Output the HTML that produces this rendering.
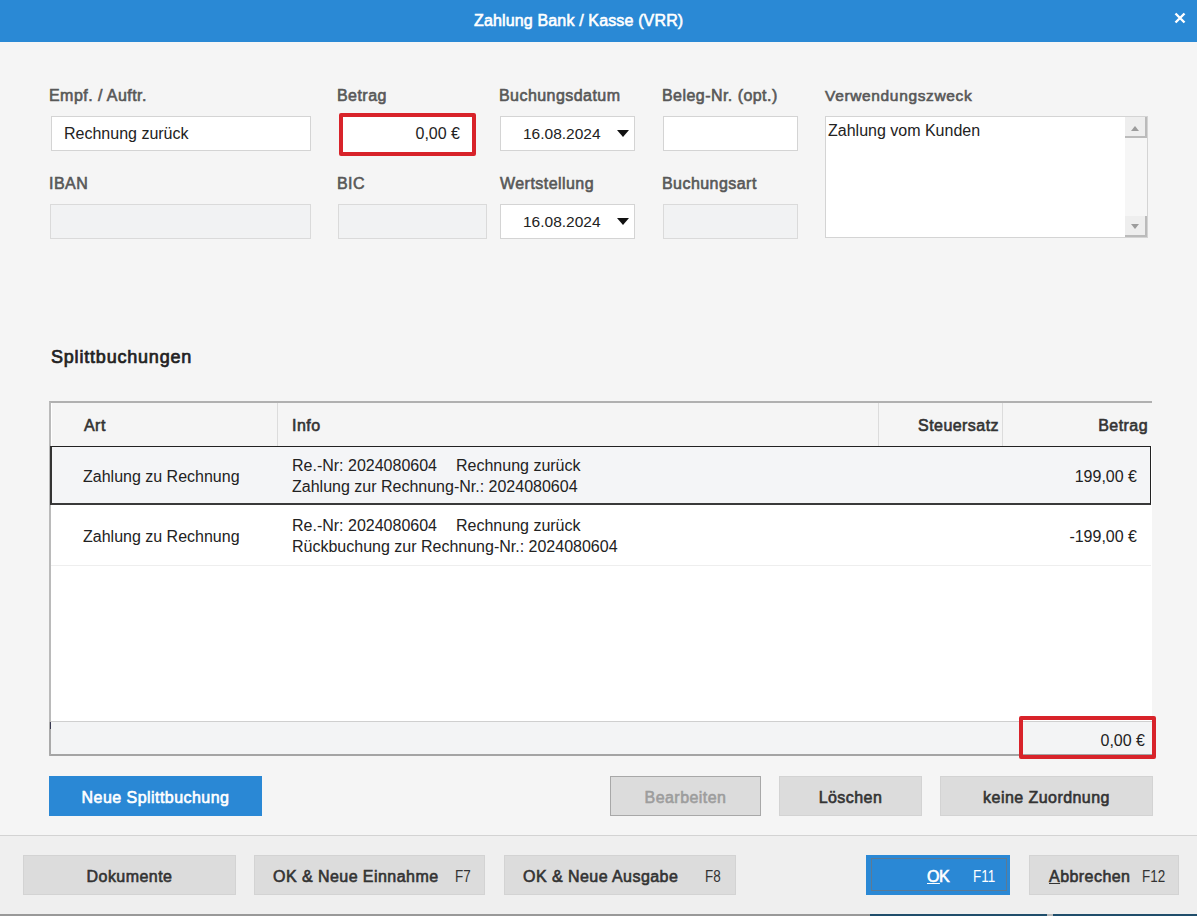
<!DOCTYPE html>
<html><head><meta charset="utf-8">
<style>
*{box-sizing:border-box;margin:0;padding:0}
html,body{width:1197px;height:916px;overflow:hidden;background:#f5f5f5;font-family:"Liberation Sans",sans-serif;color:#222}
.a{position:absolute;white-space:nowrap}
.t{position:absolute;white-space:nowrap;font-size:16px;line-height:16px}
.lbl{position:absolute;white-space:nowrap;font-size:16px;line-height:16px;font-weight:normal;color:#585858;-webkit-text-stroke-width:0.6px;letter-spacing:0.45px}
.box{position:absolute;background:#fff;border:1px solid #d4d4d4}
.dis{position:absolute;background:#f1f2f3;border:1px solid #dadada}
.btn{position:absolute;background:#dcdcdc;border:1px solid #d3d3d3}
.bt{position:absolute;white-space:nowrap;font-size:16px;line-height:16px;font-weight:normal;color:#333;-webkit-text-stroke-width:0.6px;letter-spacing:0.45px}
.fk{position:absolute;white-space:nowrap;font-size:16px;line-height:16px;font-weight:normal;color:#333;transform:scaleX(0.84);transform-origin:0 0}
.tri{position:absolute;width:0;height:0;border-left:6px solid transparent;border-right:6px solid transparent;border-top:7px solid #111}
</style></head>
<body>
<!-- title bar -->
<div class="a" style="left:0;top:0;width:1197px;height:42px;background:#2a89d5"></div>
<div class="t" style="left:474px;top:13px;font-size:16px;color:#fff;-webkit-text-stroke-width:0.6px;letter-spacing:0.15px">Zahlung Bank / Kasse (VRR)</div>
<svg class="a" style="left:1174px;top:12px" width="12" height="12" viewBox="0 0 12 12"><path d="M1.5 1.5L10.5 10.5M10.5 1.5L1.5 10.5" stroke="#fff" stroke-width="2.4"/></svg>

<!-- row 1 labels -->
<div class="lbl" style="left:49px;top:88px">Empf. / Auftr.</div>
<div class="lbl" style="left:337px;top:88px">Betrag</div>
<div class="lbl" style="left:499px;top:88px">Buchungsdatum</div>
<div class="lbl" style="left:662px;top:88px">Beleg-Nr. (opt.)</div>
<div class="lbl" style="left:825px;top:88px;font-size:15.5px;letter-spacing:0.65px">Verwendungszweck</div>

<div class="box" style="left:51px;top:116px;width:260px;height:35px"></div>
<div class="t" style="left:64px;top:126px">Rechnung zurück</div>

<div class="a" style="left:339px;top:113px;width:137px;height:43px;border:4px solid #d8232a;border-radius:2px;background:#fff"></div>
<div class="t" style="left:340px;top:126px;width:120px;text-align:right">0,00 €</div>

<div class="box" style="left:500px;top:116px;width:135px;height:35px"></div>
<div class="t" style="left:523px;top:126px;font-size:15.5px">16.08.2024</div>
<div class="tri" style="left:617px;top:130px"></div>

<div class="box" style="left:663px;top:116px;width:135px;height:35px"></div>

<div class="box" style="left:825px;top:116px;width:323px;height:122px"></div>
<div class="t" style="left:828px;top:123px">Zahlung vom Kunden</div>
<!-- scrollbar -->
<div class="a" style="left:1125px;top:117px;width:22px;height:120px;background:#f6f6f6"></div>
<div class="a" style="left:1125px;top:117px;width:22px;height:21px;background:#eeeeee;border-right:2px solid #bbbbbb;border-bottom:2px solid #bbbbbb"></div>
<div class="a" style="left:1131px;top:126px;width:0;height:0;border-left:4.5px solid transparent;border-right:4.5px solid transparent;border-bottom:5px solid #9c9c9c"></div>
<div class="a" style="left:1125px;top:216px;width:22px;height:21px;background:#eeeeee;border-right:2px solid #bbbbbb;border-bottom:2px solid #bbbbbb"></div>
<div class="a" style="left:1131px;top:224px;width:0;height:0;border-left:4.5px solid transparent;border-right:4.5px solid transparent;border-top:5px solid #9c9c9c"></div>

<!-- row 2 labels -->
<div class="lbl" style="left:49px;top:176px">IBAN</div>
<div class="lbl" style="left:337px;top:176px">BIC</div>
<div class="lbl" style="left:500px;top:176px">Wertstellung</div>
<div class="lbl" style="left:662px;top:176px">Buchungsart</div>

<div class="dis" style="left:50px;top:204px;width:261px;height:35px"></div>
<div class="dis" style="left:338px;top:204px;width:149px;height:35px"></div>
<div class="box" style="left:500px;top:204px;width:135px;height:35px"></div>
<div class="t" style="left:523px;top:214px;font-size:15.5px">16.08.2024</div>
<div class="tri" style="left:617px;top:218px"></div>
<div class="dis" style="left:663px;top:204px;width:135px;height:35px"></div>

<!-- Splittbuchungen -->
<div class="t" style="left:51px;top:348px;font-size:18px;line-height:18px;color:#222;-webkit-text-stroke-width:0.7px;letter-spacing:0.8px">Splittbuchungen</div>

<!-- table -->
<div class="a" style="left:49px;top:401px;width:1103px;height:355px;background:#fff;border-left:2px solid #bababa;border-top:2px solid #b0b0b0;border-bottom:2px solid #a4a4a4"></div>
<div class="a" style="left:52px;top:403px;width:1100px;height:43px;background:#f5f5f5"></div>
<div class="a" style="left:277px;top:403px;width:1px;height:43px;background:#dcdcdc"></div>
<div class="a" style="left:878px;top:403px;width:1px;height:43px;background:#dcdcdc"></div>
<div class="a" style="left:1002px;top:403px;width:1px;height:43px;background:#dcdcdc"></div>
<div class="bt" style="left:84px;top:418px;color:#333">Art</div>
<div class="bt" style="left:292px;top:418px;color:#333">Info</div>
<div class="bt" style="left:880px;top:418px;width:119px;text-align:right;color:#333">Steuersatz</div>
<div class="bt" style="left:1004px;top:418px;width:144px;text-align:right;color:#333">Betrag</div>

<!-- row 1 selected -->
<div class="a" style="left:50px;top:446px;width:1101px;height:59px;background:#f4f5f7;border-top:1px solid #222;border-left:2px solid #333;border-right:1px solid #222;border-bottom:2px solid #3a3a3a"></div>
<div class="t" style="left:83px;top:469px;color:#222">Zahlung zu Rechnung</div>
<div class="t" style="left:292px;top:458px;color:#222">Re.-Nr: 2024080604</div>
<div class="t" style="left:456px;top:458px;color:#222">Rechnung zurück</div>
<div class="t" style="left:292px;top:479px;color:#222">Zahlung zur Rechnung-Nr.: 2024080604</div>
<div class="t" style="left:1004px;top:469px;width:133px;text-align:right;color:#222">199,00 €</div>

<!-- row 2 -->
<div class="t" style="left:83px;top:529px;color:#222">Zahlung zu Rechnung</div>
<div class="t" style="left:292px;top:518px;color:#222">Re.-Nr: 2024080604</div>
<div class="t" style="left:456px;top:518px;color:#222">Rechnung zurück</div>
<div class="t" style="left:292px;top:539px;color:#222">Rückbuchung zur Rechnung-Nr.: 2024080604</div>
<div class="t" style="left:1004px;top:529px;width:133px;text-align:right;color:#222">-199,00 €</div>
<div class="a" style="left:51px;top:565px;width:1100px;height:1px;background:#eeeeee"></div>

<!-- footer row -->
<div class="a" style="left:51px;top:721px;width:1101px;height:33px;background:#f3f4f5;border-top:1px solid #cfcfcf"></div>
<div class="a" style="left:49px;top:722px;width:2px;height:33px;background:#aaaaaa"></div>
<div class="a" style="left:50px;top:722px;width:1px;height:7px;background:#3a3a50"></div>
<div class="a" style="left:1019px;top:716px;width:137px;height:43px;border:4px solid #d8232a;border-radius:2px"></div>
<div class="t" style="left:1004px;top:733px;width:141px;text-align:right;color:#222">0,00 €</div>

<!-- buttons row -->
<div class="a" style="left:49px;top:776px;width:213px;height:40px;background:#2a88d5"></div>
<div class="bt" style="left:49px;top:790px;width:213px;text-align:center;color:#fff">Neue Splittbuchung</div>

<div class="btn" style="left:610px;top:776px;width:151px;height:40px;border:1px solid #a8a8a8;background:#dcdcdc"></div>
<div class="bt" style="left:610px;top:790px;width:151px;text-align:center;color:#9d9d9d">Bearbeiten</div>
<div class="btn" style="left:779px;top:776px;width:143px;height:40px"></div>
<div class="bt" style="left:779px;top:790px;width:143px;text-align:center">Löschen</div>
<div class="btn" style="left:940px;top:776px;width:213px;height:40px"></div>
<div class="bt" style="left:940px;top:790px;width:213px;text-align:center">keine Zuordnung</div>

<!-- bottom bar -->
<div class="a" style="left:0;top:835px;width:1197px;height:81px;background:#efefef;border-top:1px solid #d3d3d3"></div>
<div class="btn" style="left:23px;top:855px;width:213px;height:40px"></div>
<div class="bt" style="left:23px;top:869px;width:213px;text-align:center">Dokumente</div>
<div class="btn" style="left:254px;top:855px;width:231px;height:40px"></div>
<div class="bt" style="left:273px;top:869px">OK &amp; Neue Einnahme</div>
<div class="fk" style="left:455px;top:869px">F7</div>
<div class="btn" style="left:504px;top:855px;width:232px;height:40px"></div>
<div class="bt" style="left:523px;top:869px">OK &amp; Neue Ausgabe</div>
<div class="fk" style="left:705px;top:869px">F8</div>

<div class="a" style="left:866px;top:855px;width:144px;height:40px;background:#2a88d5"></div>
<div class="a" style="left:871px;top:858px;width:136px;height:33px;border:1px solid rgba(110,118,125,0.75)"></div>
<div class="bt" style="left:927px;top:869px;color:#fff;text-decoration:underline">O</div>
<div class="bt" style="left:939px;top:869px;color:#fff">K</div>
<div class="fk" style="left:973px;top:869px;color:#fff">F11</div>

<div class="btn" style="left:1029px;top:855px;width:150px;height:40px"></div>
<div class="bt" style="left:1049px;top:869px"><span style="text-decoration:underline">A</span>bbrechen</div>
<div class="fk" style="left:1142px;top:869px">F12</div>

<div class="a" style="left:0;top:914px;width:870px;height:2px;background:#999"></div>
<div class="a" style="left:870px;top:914px;width:177px;height:2px;background:#1f4d6b"></div>
<div class="a" style="left:1047px;top:914px;width:6px;height:2px;background:#b8b8b8"></div>
<div class="a" style="left:1053px;top:914px;width:144px;height:2px;background:#1f4d6b"></div>
</body></html>
